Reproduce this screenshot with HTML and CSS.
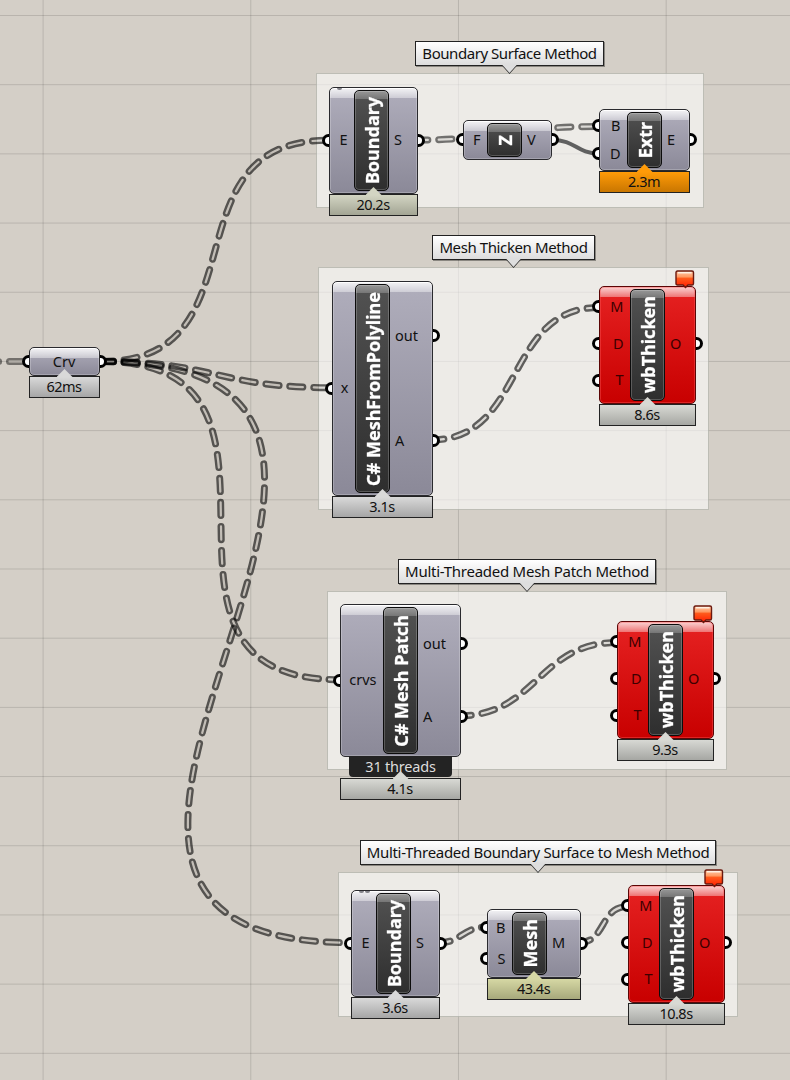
FILE: index.html
```html
<!DOCTYPE html>
<html lang="en">
<head>
<meta charset="utf-8">
<title>Definition canvas</title>
<link rel="stylesheet" href="styles.css">
</head>
<body>
<main class="canvas">
  <section class="group g1"></section>
  <section class="group g2"></section>
  <section class="group g3"></section>
  <section class="group g4"></section>

  <svg class="wires" width="790" height="1080" viewBox="0 0 790 1080">
    <defs>
      <path id="w0" d="M-14.500 361.500H26"/>
      <path id="w1" class="from-crv" d="M101.500 361.500C267 361.500 163 140.300 328 140.300"/>
      <path id="w2" class="from-crv" d="M101.500 361.500C217 361.500 216 387.700 332 387.700"/>
      <path id="w3" class="from-crv" d="M101.500 361.500C336 361.500 106 679.700 340 679.700"/>
      <path id="w4" class="from-crv" d="M101.500 361.500C534 361.500 -81 942.700 350 942.700"/>
      <path id="w6" d="M414.500 140C507 140 507 126.500 599 126.500"/>
      <path id="w8" d="M430.500 440C526 440 504 307.500 599 307.500"/>
      <path id="w9" d="M458 716C537 716 538 642.500 617 642.500"/>
      <path id="w10" d="M437 943C462 943 462 927 487 927"/>
      <path id="w11" d="M577.500 943C607 943 599 906.500 628 906.500"/>
      <mask id="m0" maskUnits="userSpaceOnUse" x="0" y="0" width="790" height="1080"><use href="#w0" class="outer"/><use href="#w0" class="inner"/></mask>
      <mask id="m1" maskUnits="userSpaceOnUse" x="0" y="0" width="790" height="1080"><use href="#w1" class="outer"/><use href="#w1" class="inner"/></mask>
      <mask id="m2" maskUnits="userSpaceOnUse" x="0" y="0" width="790" height="1080"><use href="#w2" class="outer"/><use href="#w2" class="inner"/></mask>
      <mask id="m3" maskUnits="userSpaceOnUse" x="0" y="0" width="790" height="1080"><use href="#w3" class="outer"/><use href="#w3" class="inner"/></mask>
      <mask id="m4" maskUnits="userSpaceOnUse" x="0" y="0" width="790" height="1080"><use href="#w4" class="outer"/><use href="#w4" class="inner"/></mask>
      <mask id="m6" maskUnits="userSpaceOnUse" x="0" y="0" width="790" height="1080"><use href="#w6" class="outer"/><use href="#w6" class="inner"/></mask>
      <mask id="m8" maskUnits="userSpaceOnUse" x="0" y="0" width="790" height="1080"><use href="#w8" class="outer"/><use href="#w8" class="inner"/></mask>
      <mask id="m9" maskUnits="userSpaceOnUse" x="0" y="0" width="790" height="1080"><use href="#w9" class="outer"/><use href="#w9" class="inner"/></mask>
      <mask id="m10" maskUnits="userSpaceOnUse" x="0" y="0" width="790" height="1080"><use href="#w10" class="outer"/><use href="#w10" class="inner"/></mask>
      <mask id="m11" maskUnits="userSpaceOnUse" x="0" y="0" width="790" height="1080"><use href="#w11" class="outer"/><use href="#w11" class="inner"/></mask>
    </defs>
    <rect class="ink faint" mask="url(#m0)"/>
    <rect class="ink" mask="url(#m1)"/>
    <rect class="ink" mask="url(#m2)"/>
    <rect class="ink" mask="url(#m3)"/>
    <rect class="ink" mask="url(#m4)"/>
    <rect class="ink soft" mask="url(#m6)"/>
    <rect class="ink" mask="url(#m8)"/>
    <rect class="ink" mask="url(#m9)"/>
    <rect class="ink" mask="url(#m10)"/>
    <rect class="ink" mask="url(#m11)"/>
    <path class="solid" d="M552 140C576 140 576 153.500 599 153.500"/>
  </svg>

  <h2 class="title t1">Boundary Surface Method</h2>
  <h2 class="title t2">Mesh Thicken Method</h2>
  <h2 class="title t3">Multi-Threaded Mesh Patch Method</h2>
  <h2 class="title t4">Multi-Threaded Boundary Surface to Mesh Method</h2>

  <article class="node param crv">
    <div class="caption"><i class="grip in"></i>Crv<i class="grip out"></i></div>
    <div class="time">62ms</div>
  </article>

  <article class="node boundary1">
    <i class="mark"></i>
    <div class="ports ins"><span class="port">E<i class="grip in"></i></span></div>
    <div class="name"><b>Boundary</b></div>
    <div class="ports outs"><span class="port">S<i class="grip out"></i></span></div>
    <div class="time sage">20.2s</div>
  </article>

  <article class="node unitz">
    <div class="ports ins"><span class="port">F<i class="grip in"></i></span></div>
    <div class="name"><b>Z</b></div>
    <div class="ports outs"><span class="port">V<i class="grip out"></i></span></div>
  </article>

  <article class="node extr">
    <div class="ports ins"><span class="port">B<i class="grip in"></i></span><span class="port">D<i class="grip in"></i></span></div>
    <div class="name"><b>Extr</b></div>
    <div class="ports outs"><span class="port">E<i class="grip out"></i></span></div>
    <div class="time orange">2.3m</div>
  </article>

  <article class="node polyline">
    <div class="ports ins"><span class="port">x<i class="grip in"></i></span></div>
    <div class="name"><b>C# MeshFromPolyline</b></div>
    <div class="ports outs"><span class="port">out<i class="grip out"></i></span><span class="port">A<i class="grip out"></i></span></div>
    <div class="time">3.1s</div>
  </article>

  <article class="node error wb1">
    <div class="ports ins"><span class="port">M<i class="grip in"></i></span><span class="port">D<i class="grip in"></i></span><span class="port">T<i class="grip in"></i></span></div>
    <div class="name"><b>wbThicken</b></div>
    <div class="ports outs"><span class="port">O<i class="grip out"></i></span></div>
    <div class="time pale">8.6s</div>
    <svg class="balloon" width="20" height="19" viewBox="0 0 20 19"><use href="#balloon"/></svg>
  </article>

  <article class="node patch">
    <div class="ports ins"><span class="port">crvs<i class="grip in"></i></span></div>
    <div class="name"><b>C# Mesh Patch</b></div>
    <div class="ports outs"><span class="port">out<i class="grip out"></i></span><span class="port">A<i class="grip out"></i></span></div>
    <div class="threads">31 threads</div>
    <div class="time pale">4.1s</div>
  </article>

  <article class="node error wb2">
    <div class="ports ins"><span class="port">M<i class="grip in"></i></span><span class="port">D<i class="grip in"></i></span><span class="port">T<i class="grip in"></i></span></div>
    <div class="name"><b>wbThicken</b></div>
    <div class="ports outs"><span class="port">O<i class="grip out"></i></span></div>
    <div class="time pale">9.3s</div>
    <svg class="balloon" width="20" height="19" viewBox="0 0 20 19"><use href="#balloon"/></svg>
  </article>

  <article class="node boundary2">
    <i class="mark"></i><i class="mark second"></i>
    <div class="ports ins"><span class="port">E<i class="grip in"></i></span></div>
    <div class="name"><b>Boundary</b></div>
    <div class="ports outs"><span class="port">S<i class="grip out"></i></span></div>
    <div class="time">3.6s</div>
  </article>

  <article class="node mesh">
    <div class="ports ins"><span class="port">B<i class="grip in"></i></span><span class="port">S<i class="grip in"></i></span></div>
    <div class="name"><b>Mesh</b></div>
    <div class="ports outs"><span class="port">M<i class="grip out"></i></span></div>
    <div class="time olive">43.4s</div>
  </article>

  <article class="node error wb3">
    <div class="ports ins"><span class="port">M<i class="grip in"></i></span><span class="port">D<i class="grip in"></i></span><span class="port">T<i class="grip in"></i></span></div>
    <div class="name"><b>wbThicken</b></div>
    <div class="ports outs"><span class="port">O<i class="grip out"></i></span></div>
    <div class="time pale">10.8s</div>
    <svg class="balloon" width="20" height="19" viewBox="0 0 20 19"><use href="#balloon"/></svg>
  </article>

  <svg class="defs" width="0" height="0">
    <defs>
      <linearGradient id="flame" x1="0" y1="0" x2="0" y2="1">
        <stop offset="0" stop-color="#ffc9a8"/><stop offset=".35" stop-color="#ff9a63"/>
        <stop offset=".45" stop-color="#ff5a1c"/><stop offset="1" stop-color="#ff1c00"/>
      </linearGradient>
      <g id="balloon">
        <path d="M2.500 1H17Q18.500 1 18.500 2.500V13.500Q18.500 15 17 15H13L10.500 17.500L8 15H2.500Q1 15 1 13.500V2.500Q1 1 2.500 1Z" fill="url(#flame)" stroke="#6a180e" stroke-width="1.400"/>
        <path d="M3 2.700H16.500" stroke="#fff0e2" stroke-width="1.500"/>
      </g>
    </defs>
  </svg>
</main>
</body>
</html>
```

FILE: styles.css
```css
* { box-sizing: border-box; }
body { margin: 0; }

.canvas {
  position: relative;
  width: 790px;
  height: 1080px;
  overflow: hidden;
  font-family: "Noto Sans", "Open Sans", sans-serif;
  font-size: 14.500px;
  color: #111;
  background-color: #d4cfc7;
  background-image:
    linear-gradient(to right, rgba(0,0,0,.13) 1px, transparent 1px),
    linear-gradient(to bottom, rgba(0,0,0,.13) 1px, transparent 1px);
  background-size: 207.700px 100%, 100% 69.200px;
  background-position: 42.600px 0, 0 15px;
}

/* Groups */
.group {
  position: absolute;
  background: rgba(255,255,255,.58);
  border: 1px solid rgba(110,115,100,.38);
}
.g1 { left: 316px; top: 73px; width: 388px; height: 135px; }
.g2 { left: 318px; top: 267px; width: 391px; height: 243px; }
.g3 { left: 327px; top: 591px; width: 400px; height: 179px; }
.g4 { left: 338px; top: 872px; width: 400px; height: 145px; }

/* Wires: rounded dashes with a hollow core */
.wires { position: absolute; inset: 0; }
.outer, .inner {
  fill: none;
  stroke-linecap: round;
  stroke-dasharray: 13.200 10.800;
}
.from-crv { stroke-dashoffset: 1.500px; }
.outer { stroke: #fff; stroke-width: 7px; }
.inner { stroke: #222; stroke-width: 2.200px; }
.ink { width: 790px; height: 1080px; fill: rgba(0,0,0,.6); }
.faint { fill: rgba(0,0,0,.46); }
.soft { fill: rgba(0,0,0,.52); }
.solid { fill: none; stroke: #606060; stroke-width: 4px; }

/* Scribble titles */
.title {
  position: absolute;
  display: flex;
  align-items: center;
  justify-content: center;
  margin: 0;
  height: 25px;
  padding-bottom: 1px;
  border: 1.500px solid #222;
  background: linear-gradient(#fff, #ddd);
  box-shadow: 1px 1px 0 rgba(0,0,0,.35);
  font-size: 15px;
  font-weight: 400;
  white-space: nowrap;
}
.title::before, .title::after {
  content: "";
  position: absolute;
  left: 50%;
  top: 23px;
  width: 16px;
  height: 9px;
  margin-left: -8px;
  background: #222;
  clip-path: polygon(0 0, 100% 0, 50% 100%);
}
.title::after { top: 22px; background: #dedede; }
.t1 { left: 415px; top: 41px; width: 189px; letter-spacing: -.45px; }
.t2 { left: 432px; top: 235px; width: 163px; letter-spacing: -.4px; }
.t3 { left: 398px; top: 559px; width: 258px; letter-spacing: -.26px; }
.t4 { left: 360px; top: 840px; width: 356px; letter-spacing: -.31px; }

/* Nodes */
.node {
  position: absolute;
  display: flex;
  padding: 2px 0;
  border: 1.500px solid #2a2a2e;
  border-radius: 5px;
  background:
    linear-gradient(rgba(255,255,255,.85) 0, rgba(255,255,255,.4) 10px, transparent 10px),
    linear-gradient(#b0aebc, #8b8998);
  box-shadow: inset 0 0 0 1px rgba(255,255,255,.22), inset 0 1px 0 #fff;
}
.error {
  border-color: #5a0505;
  background:
    linear-gradient(rgba(255,255,255,.8) 0, rgba(255,255,255,.38) 10px, transparent 10px),
    linear-gradient(#e62222, #c80000);
  box-shadow: inset 0 0 0 1px rgba(255,90,90,.4);
}
.ports {
  display: flex;
  flex-direction: column;
}
.ins { width: var(--in); }
.outs { flex: 1; }
.port {
  position: relative;
  flex: 1;
  display: flex;
  align-items: center;
  padding-bottom: 2px;
  line-height: 1;
}
.ins .port { justify-content: flex-end; padding-right: 6.500px; }
.outs .port { padding-left: 5px; }
.error .port { color: #3c0000; }
.error .ports { margin-bottom: 2px; }

.name {
  display: flex;
  align-items: center;
  justify-content: center;
  width: 35px;
  border: 1.500px solid #0c0c0c;
  border-radius: 5px;
  background:
    linear-gradient(rgba(255,255,255,.4) 0, rgba(255,255,255,.22) 8px, transparent 8px),
    linear-gradient(#525252, #2e2e2e);
  box-shadow: inset 0 0 0 1px rgba(255,255,255,.2);
  color: #fff;
  font-size: 18px;
}
.name b {
  writing-mode: vertical-rl;
  transform: rotate(180deg);
  line-height: 1;
  white-space: nowrap;
  -webkit-text-stroke: .3px #fff;
}

.grip {
  position: absolute;
  top: calc(50% - 7px);
  width: 7px;
  height: 13px;
  border: 3px solid #000;
  background: #fff;
}
.grip.in { left: -8px; border-right: 0; border-radius: 7px 0 0 7px; }
.grip.out { right: -8px; border-left: 0; border-radius: 0 7px 7px 0; }

/* Profiler tags */
.time {
  position: absolute;
  left: -1px;
  right: -1px;
  top: calc(100% + 1px);
  height: 22px;
  display: flex;
  align-items: center;
  justify-content: center;
  padding: 0 1px 2px 0;
  border: 1.500px solid #222;
  letter-spacing: -.5px;
  background: linear-gradient(var(--hi), var(--lo));
  --hi: #d9d9d9;
  --lo: #a6a6a6;
}
.time::before {
  content: "";
  position: absolute;
  left: calc(50% - 8px);
  top: -8px;
  width: 16px;
  height: 8px;
  background: var(--hi);
  clip-path: polygon(50% 0, 100% 100%, 0 100%);
}
.pale { --hi: #d8d9d4; --lo: #a6a7a3; }
.sage { --hi: #d3d5c3; --lo: #a3a594; }
.olive { --hi: #d6d8a4; --lo: #a7a97c; }
.orange { --hi: #ff9b08; --lo: #c97600; }

.threads {
  position: absolute;
  left: 8px;
  top: 100%;
  width: 103px;
  height: 21px;
  display: flex;
  align-items: center;
  justify-content: center;
  padding-bottom: 2px;
  border-radius: 0 0 4px 4px;
  background: #232323;
  color: #ddd;
  letter-spacing: -.2px;
}
.mark {
  position: absolute;
  left: 7px;
  top: 0;
  width: 5px;
  height: 2px;
  background: #85858c;
  border-radius: 0 0 3px 3px;
}
.mark.second { left: 13px; }
.balloon { position: absolute; left: 75px; top: -17px; }
.defs { position: absolute; }

.crv { left: 29px; top: 347px; width: 71px; height: 29px; }
.caption {
  position: relative;
  flex: 1;
  display: flex;
  align-items: center;
  justify-content: center;
  padding: 0 1px 2px 0;
}
.caption .grip { top: calc(50% - 6.500px); }
.boundary1 { left: 329px; top: 87px; width: 89px; height: 107px; --in: 24px; }
.unitz { left: 463px; top: 120px; width: 89px; height: 40px; --in: 23px; }
.extr { left: 599px; top: 109px; width: 91px; height: 62px; --in: 27px; }
.polyline { left: 332px; top: 281px; width: 101px; height: 215px; --in: 22px; }
.wb1 { left: 599px; top: 286px; width: 97px; height: 118px; --in: 30px; }
.patch { left: 340px; top: 604px; width: 121px; height: 153px; --in: 42px; }
.patch .time { top: calc(100% + 22px); }
.wb2 { left: 617px; top: 621px; width: 97px; height: 118px; --in: 30px; }
.boundary2 { left: 351px; top: 890px; width: 89px; height: 107px; --in: 24px; }
.mesh { left: 487px; top: 909px; width: 94px; height: 69px; --in: 24px; }
.wb3 { left: 628px; top: 885px; width: 97px; height: 118px; --in: 30px; }
```
